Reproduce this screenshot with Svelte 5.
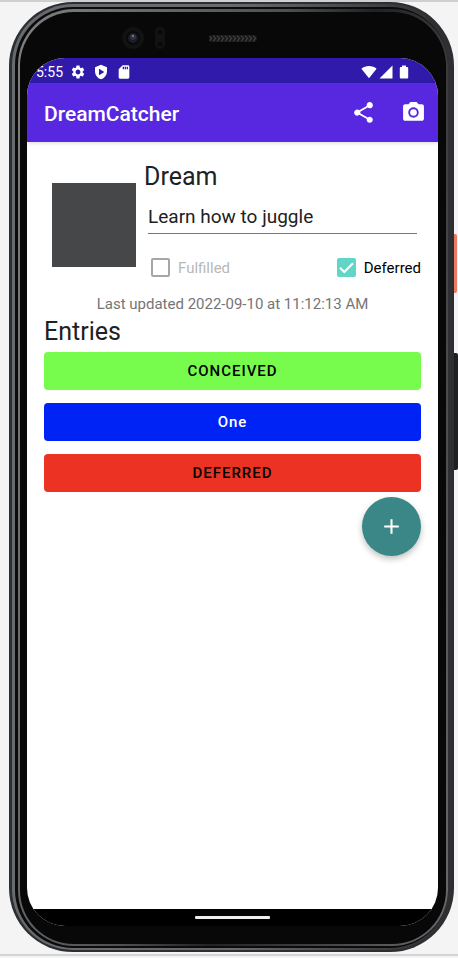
<script>
  let title = $state('Learn how to juggle');
  let fulfilled = $state(false);
  let deferred = $state(true);

  const entries = [
    { label: 'CONCEIVED', kind: 'conceived' },
    { label: 'One', kind: 'reflection' },
    { label: 'DEFERRED', kind: 'deferred' }
  ];
</script>

<div class="page">
  <div class="phone">
    <span class="side power"></span>
    <span class="side volume"></span>
    <div class="shell"><div class="rim"><div class="groove"><div class="shine"><div class="bezel">
      <div class="hardware">
        <div class="sensors">
          <svg class="camera" viewBox="0 0 22 22" aria-hidden="true">
            <circle cx="11" cy="11" r="11" fill="#121212" />
            <circle cx="11" cy="11" r="7" fill="#0a0a0d" />
            <circle cx="11" cy="11" r="5" fill="#1b1c25" />
            <circle cx="11" cy="10" r="3" fill="#30323f" />
            <circle cx="11" cy="9" r="1" fill="#8a8ca8" />
          </svg>
          <svg class="sensor" viewBox="0 0 10 22" aria-hidden="true">
            <rect width="10" height="22" rx="5" fill="#121212" />
            <circle cx="5" cy="5" r="3.5" fill="#0a0a0a" stroke="#181818" />
            <circle cx="5" cy="17" r="3.5" fill="#0a0a0a" stroke="#181818" />
          </svg>
        </div>
        <svg class="speaker" viewBox="0 0 48 7" aria-hidden="true">
          <defs>
            <pattern id="mesh" width="4" height="7" patternUnits="userSpaceOnUse">
              <path d="M0 0.5 L2.5 3.5 L0 6.5" fill="none" stroke="#444" stroke-width="1.1" />
            </pattern>
          </defs>
          <rect width="48" height="7" rx="3" fill="#191919" />
          <rect width="48" height="7" rx="3" fill="url(#mesh)" />
        </svg>
      </div>

      <div class="screen">
        <div class="status">
          <span class="time">5:55</span>
          <svg width="16" height="16" viewBox="0 0 24 24" aria-hidden="true"><path d="M19.14 12.94c.04-.3.06-.61.06-.94 0-.32-.02-.64-.07-.94l2.03-1.58c.18-.14.23-.41.12-.61l-1.92-3.32c-.12-.22-.37-.29-.59-.22l-2.39.96c-.5-.38-1.03-.7-1.62-.94l-.36-2.54c-.04-.24-.24-.41-.48-.41h-3.84c-.24 0-.43.17-.47.41l-.36 2.54c-.59.24-1.13.57-1.62.94l-2.39-.96c-.22-.08-.47 0-.59.22L2.74 8.87c-.12.21-.08.47.12.61l2.03 1.58c-.05.3-.09.63-.09.94s.02.64.07.94l-2.03 1.58c-.18.14-.23.41-.12.61l1.92 3.32c.12.22.37.29.59.22l2.39-.96c.5.38 1.03.7 1.62.94l.36 2.54c.05.24.24.41.48.41h3.84c.24 0 .44-.17.47-.41l.36-2.54c.59-.24 1.13-.56 1.62-.94l2.39.96c.22.08.47 0 .59-.22l1.92-3.32c.12-.22.07-.47-.12-.61l-2.01-1.58zM12 15.6c-1.98 0-3.6-1.62-3.6-3.6s1.62-3.6 3.6-3.6 3.6 1.62 3.6 3.6-1.62 3.6-3.6 3.6z" /></svg>
          <svg width="16" height="16" viewBox="0 0 24 24" aria-hidden="true"><path fill-rule="evenodd" d="M12 1 3 5v6c0 5.55 3.84 10.74 9 12 5.16-1.26 9-6.45 9-12V5l-9-4zM9 7.2 17 12l-8 4.8z" /></svg>
          <svg width="16" height="16" viewBox="0 0 24 24" aria-hidden="true"><path d="M18 2h-8L4.02 8 4 20c0 1.1.9 2 2 2h12c1.1 0 2-.9 2-2V4c0-1.100-.9-2-2-2zm-6 6h-2V4h2v4zm3 0h-2V4h2v4zm3 0h-2V4h2v4z" /></svg>
          <span class="system">
            <svg width="16" height="14" viewBox="0 0 16 14" aria-hidden="true"><path d="M8 13.300 0.400 3.800C2.500 2 5.100 1 8 1s5.500 1 7.600 2.800z" /></svg>
            <svg width="14" height="14" viewBox="0 0 14 14" aria-hidden="true"><path d="M0.500 13.500 13.500 0.500V13.500z" /></svg>
            <svg class="battery" width="10" height="14" viewBox="0 0 10 14" aria-hidden="true"><path d="M3 0.500H7V2H8.200Q9.200 2 9.200 3V12.500Q9.200 13.500 8.200 13.500H1.800Q0.800 13.500 0.800 12.500V3Q0.800 2 1.800 2H3z" /></svg>
          </span>
        </div>

        <header class="appbar">
          <h1>DreamCatcher</h1>
          <button type="button" aria-label="Share">
            <svg width="25" height="25" viewBox="0 0 24 24" aria-hidden="true"><path d="M18 16.080c-.76 0-1.440.3-1.960.77L8.910 12.700c.05-.23.09-.46.09-.7s-.04-.47-.09-.7l7.050-4.110c.54.5 1.250.81 2.040.81 1.660 0 3-1.340 3-3s-1.340-3-3-3-3 1.340-3 3c0 .24.04.47.09.7L8.040 9.810C7.500 9.310 6.790 9 6 9c-1.660 0-3 1.340-3 3s1.340 3 3 3c.79 0 1.500-.31 2.040-.81l7.120 4.160c-.05.21-.08.43-.08.65 0 1.610 1.310 2.920 2.920 2.920s2.920-1.310 2.920-2.920-1.310-2.920-2.920-2.920z" /></svg>
          </button>
          <button type="button" aria-label="Take photo">
            <svg width="25" height="25" viewBox="0 0 24 24" aria-hidden="true"><circle cx="12" cy="12" r="3.200" /><path d="M9 2 7.170 4H4c-1.100 0-2 .9-2 2v12c0 1.100.9 2 2 2h16c1.100 0 2-.9 2-2V6c0-1.100-.9-2-2-2h-3.170L15 2H9zm3 15c-2.760 0-5-2.240-5-5s2.240-5 5-5 5 2.240 5 5-2.240 5-5 5z" /></svg>
          </button>
        </header>

        <main>
          <section class="dream">
            <div class="photo"></div>
            <div class="details">
              <label class="heading" for="dream-title">Dream</label>
              <input id="dream-title" class="title" type="text" bind:value={title} />
              <div class="checks">
                <label class:off={deferred}>
                  <input type="checkbox" bind:checked={fulfilled} disabled={deferred} />Fulfilled
                </label>
                <label class:off={fulfilled}>
                  <input type="checkbox" bind:checked={deferred} disabled={fulfilled} />Deferred
                </label>
              </div>
            </div>
          </section>
          <p class="updated">Last updated 2022-09-10 at 11:12:13 AM</p>
          <h2 class="heading">Entries</h2>
          <div class="entries">
            {#each entries as entry}
              <button type="button" class="entry {entry.kind}">{entry.label}</button>
            {/each}
          </div>
          <button type="button" class="add" aria-label="Add entry">
            <svg width="25" height="25" viewBox="0 0 24 24" aria-hidden="true"><path d="M19 13h-6v6h-2v-6H5v-2h6V5h2v6h6z" /></svg>
          </button>
        </main>

        <div class="nav"><span></span></div>
      </div>
    </div></div></div></div></div>
  </div>
</div>

<style>
  .page {
    box-sizing: border-box;
    display: flex;
    min-height: 100vh;
    padding: 0 4px 6px 9px;
    border-top: 2px solid #cfcfcf;
    background: linear-gradient(0deg, #f4f4f4 2px, #d2d2d2 2px 4px, #f4f4f4 4px);
    font-family: Roboto, "Liberation Sans", sans-serif;
    color: #212121;
  }
  .page * { box-sizing: border-box; }
  .phone, .shell, .rim, .groove, .shine, .bezel, .screen {
    display: flex;
    flex: 1;
    flex-direction: column;
    min-width: 0;
  }
  .phone { position: relative; }
  .shell { position: relative; padding: 2px 3px 2px 3px; border-radius: 64px; background: #2c2e30; }
  .rim { padding: 3px 3px 2px 3px; border-radius: 61px; background: linear-gradient(90deg, #676b70 0 50%, #2e3033 96%); }
  .groove { padding: 2px 0 2px 3px; border-radius: 58px; background: #0b0b0c; }
  .shine { padding: 3px 2px 2px 2px; border-radius: 56px; background: linear-gradient(100deg, #808080, #505050 45%, #222 60%, #666 98%); }
  .bezel { padding: 0 8px 18px 7px; border-radius: 54px; background: #080809; }

  .side { position: absolute; }
  .power { right: -3px; top: 232px; width: 10px; height: 59px; border-radius: 2px; background: #ea7a62; }
  .volume { right: -4px; top: 351px; width: 10px; height: 117px; border-radius: 2px; background: #1e2022; }

  .hardware { display: grid; grid-template-columns: 1fr 48px 1fr; align-items: center; height: 46px; padding-top: 6px; }
  .sensors { display: flex; justify-content: flex-end; gap: 11px; padding-right: 44px; }
  .camera { width: 22px; height: 22px; }
  .sensor { width: 10px; height: 22px; }
  .speaker { width: 48px; height: 7px; }

  .screen { overflow: hidden; border-radius: 38px; background: #fff; }
  .status {
    display: flex;
    align-items: center;
    gap: 7px;
    height: 25px;
    padding: 2px 29px 0 9px;
    background: #2f1aab;
    color: #fff;
    font-size: 14px;
  }
  .status svg { fill: #fff; }
  .system { display: flex; gap: 2px; margin-left: auto; }
  .system .battery { margin-left: 4px; }

  .appbar {
    display: flex;
    align-items: center;
    gap: 25px;
    height: 59px;
    padding: 0 12px 0 17px;
    background: #5828e1;
    box-shadow: 0 1px 4px rgba(0, 0, 0, 0.15);
    color: #fff;
  }
  h1 { flex: 1; margin: 0; padding-top: 2px; font-size: 21px; font-weight: 500; line-height: 28px; }
  .appbar button { display: flex; margin: 0; padding: 0; border: 0; background: none; cursor: pointer; }
  .appbar svg { fill: #fff; }

  main { display: flex; flex: 1; flex-direction: column; padding: 17px; }
  .dream { display: flex; align-items: flex-start; gap: 8px; padding-left: 8px; }
  .photo { width: 84px; height: 84px; margin-top: 24px; background: #464749; }
  .details { display: flex; flex: 1; flex-direction: column; min-width: 0; }
  .heading { margin: 0; font-size: 25px; font-weight: 400; line-height: 36px; }
  .title {
    height: 46px;
    margin: 0 4px;
    padding: 0 0 3px;
    border: 0;
    background: linear-gradient(#777, #777) 0 38px / 100% 1px no-repeat;
    outline: 0;
    color: #212121;
    font: 400 19px/24px Roboto, "Liberation Sans", sans-serif;
  }
  .checks { display: flex; justify-content: space-between; height: 53px; padding: 0 0 0 7px; }
  .checks label { display: flex; align-items: center; gap: 8px; color: #000; font-size: 15px; }
  .checks label.off { color: #b8b8b8; }
  .checks input {
    width: 19px;
    height: 19px;
    margin: 0;
    border: 2px solid #a6a6a6;
    border-radius: 2px;
    appearance: none;
    background: #fff;
  }
  .checks input:checked {
    border-color: #61d5c6;
    background: #61d5c6 url("data:image/svg+xml,%3Csvg xmlns='http://www.w3.org/2000/svg' viewBox='0 0 15 15'%3E%3Cpath d='M1 7.800 5.300 12 14 3.200' fill='none' stroke='%23fff' stroke-width='2'/%3E%3C/svg%3E") center / 15px 15px no-repeat;
  }
  .updated { margin: 0; color: #757575; font-size: 15px; line-height: 20px; text-align: center; }
  .entries { display: flex; flex-direction: column; gap: 13px; margin-top: 2px; }
  .entry {
    height: 38px;
    padding: 0;
    border: 0;
    border-radius: 4px;
    color: #000;
    font: 500 15px/20px Roboto, "Liberation Sans", sans-serif;
    letter-spacing: 1px;
    cursor: pointer;
  }
  .conceived { background: #77fb4c; }
  .reflection { background: #0023f5; color: #fff; }
  .deferred { background: #ec3323; }
  .add {
    display: flex;
    align-items: center;
    justify-content: center;
    align-self: flex-end;
    width: 59px;
    height: 59px;
    margin-top: 5px;
    padding: 0;
    border: 0;
    border-radius: 50%;
    background: #3b8686;
    box-shadow: 0 3px 6px rgba(0, 0, 0, 0.25);
    cursor: pointer;
  }
  .add svg { fill: #fff; }

  .nav { display: flex; align-items: center; justify-content: center; height: 17px; background: #000; }
  .nav span { width: 75px; height: 3px; border-radius: 1px; background: #eee; }
</style>
